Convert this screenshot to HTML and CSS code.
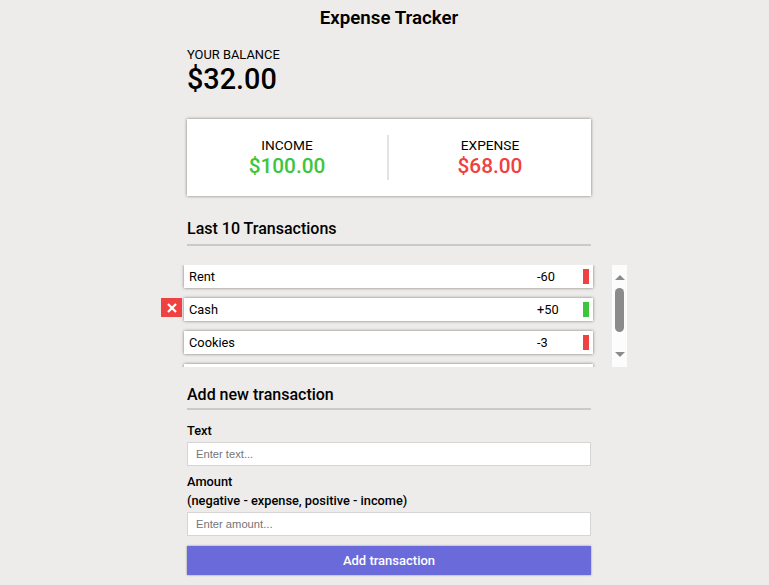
FILE: index.html
```html
<!DOCTYPE html>
<html lang="en">
<head>
<meta charset="utf-8">
<title>Expense Tracker</title>
<link rel="stylesheet" href="styles.css">
</head>
<body>
<main class="tracker">
  <h1 class="title">Expense Tracker</h1>
  <section class="balance">
    <h4 class="caption">YOUR BALANCE</h4>
    <div class="balance-value">$32.00</div>
  </section>
  <section class="summary">
    <div class="half"><h4 class="summary-label">INCOME</h4><p class="money plus">$100.00</p></div>
    <div class="half"><h4 class="summary-label">EXPENSE</h4><p class="money minus">$68.00</p></div>
  </section>
  <h3 class="heading">Last 10 Transactions</h3>
  <div class="history">
    <ul class="list">
      <li class="item"><span class="name">Rent</span><span class="value">-60</span><i class="mark out"></i></li>
      <li class="item"><button class="delete" aria-label="Delete"><svg width="10" height="10" viewBox="0 0 10 10"><path d="M1 1L9 9M9 1L1 9" fill="none" stroke="#fff" stroke-width="2.2"/></svg></button><span class="name">Cash</span><span class="value">+50</span><i class="mark in"></i></li>
      <li class="item"><span class="name">Cookies</span><span class="value">-3</span><i class="mark out"></i></li>
      <li class="item"></li>
    </ul>
    <div class="scrollbar">
      <svg width="10" height="5" viewBox="0 0 10 5"><path d="M0 5L5 0L10 5Z" fill="#8b8b8b"/></svg>
      <div class="thumb"></div>
      <svg width="10" height="5" viewBox="0 0 10 5"><path d="M0 0L5 5L10 0Z" fill="#8b8b8b"/></svg>
    </div>
  </div>
  <h3 class="heading add-heading">Add new transaction</h3>
  <form class="form">
    <label class="label" for="text">Text</label>
    <input class="field" id="text" type="text" placeholder="Enter text...">
    <label class="label" for="amount">Amount<br>(negative - expense, positive - income)</label>
    <input class="field" id="amount" type="text" placeholder="Enter amount...">
    <button class="submit" type="button">Add transaction</button>
  </form>
</main>
</body>
</html>
```
FILE: styles.css
```css
* { box-sizing: border-box; }
body {
  margin: 0;
  height: 585px;
  overflow: hidden;
  background: #eeecea;
  color: #000;
  font-family: Roboto, sans-serif;
}
h1, h3, h4, p, ul { margin: 0; padding: 0; }
.tracker { width: 404px; margin-left: 187px; }
.title {
  height: 35px;
  padding-top: 1px;
  line-height: 35px;
  font-size: 18.72px;
  font-weight: 600;
  text-align: center;
}
.balance { height: 84px; padding-top: 12px; }
.caption { font-size: 12.9px; line-height: 15px; font-weight: 400; }
.balance-value { font-size: 28.8px; line-height: 34px; font-weight: 500; }
.summary {
  display: flex;
  height: 77px;
  padding: 16px 0;
  background: #fff;
  box-shadow: 0 0 3px #777;
  text-align: center;
}
.half { width: 50%; }
.half:first-child { border-right: 2px solid #e5e2e2; }
.summary-label { padding-top: 2px; font-size: 13.7px; line-height: 16px; font-weight: 400; }
.money { font-size: 20.8px; line-height: 26px; font-weight: 500; }
.plus { color: #3dc63d; }
.minus { color: #ef4141; }
.heading {
  height: 30px;
  margin-top: 20px;
  padding-top: 1px;
  border-bottom: 2px solid #cbcac9;
  font-size: 16px;
  line-height: 24px;
  font-weight: 500;
}
.history {
  display: flex;
  justify-content: space-between;
  width: 466px;
  height: 102px;
  margin: 19px 0 0 -26px;
  overflow: hidden;
}
.list { width: 432px; padding-left: 23px; list-style: none; }
.item {
  position: relative;
  display: flex;
  align-items: center;
  width: 409px;
  height: 23px;
  margin-bottom: 10px;
  padding: 0 4px 0 5px;
  background: #fff;
  box-shadow: 0 0 3px #777;
  font-size: 12.8px;
}
.name { flex: 1; }
.value { width: 46px; }
.mark { width: 6px; height: 15px; }
.in { background: #3dc63d; }
.out { background: #ef4141; }
.delete {
  position: absolute;
  left: -23px;
  top: 0;
  display: flex;
  align-items: center;
  justify-content: center;
  width: 21px;
  height: 19px;
  padding: 1px 0 0 1px;
  border: 0;
  background: #ef4141;
}
.scrollbar {
  display: flex;
  flex-direction: column;
  align-items: center;
  width: 15px;
  padding: 10px 0;
  background: #fcfcfc;
}
.thumb { width: 9px; height: 44px; margin: 8px 0 20px; border-radius: 5px; background: #8b8b8b; }
.add-heading { margin-top: 15px; height: 28px; }
.form { padding-top: 11px; }
.label { display: block; font-size: 12.8px; line-height: 19px; font-weight: 500; }
.field {
  display: block;
  width: 404px;
  height: 24px;
  margin: 2px 0 6px;
  padding: 0 8px;
  border: 1px solid #d6d5d4;
  background: #fff;
  font: 11.2px "Liberation Sans", sans-serif;
}
.field::placeholder { color: #757575; }
.submit {
  display: block;
  width: 404px;
  height: 29px;
  margin-top: 10px;
  padding: 0;
  border: 0;
  background: #6a6adb;
  box-shadow: 0 0 2px #888;
  color: #fff;
  font: 500 13px Roboto, sans-serif;
}
```
